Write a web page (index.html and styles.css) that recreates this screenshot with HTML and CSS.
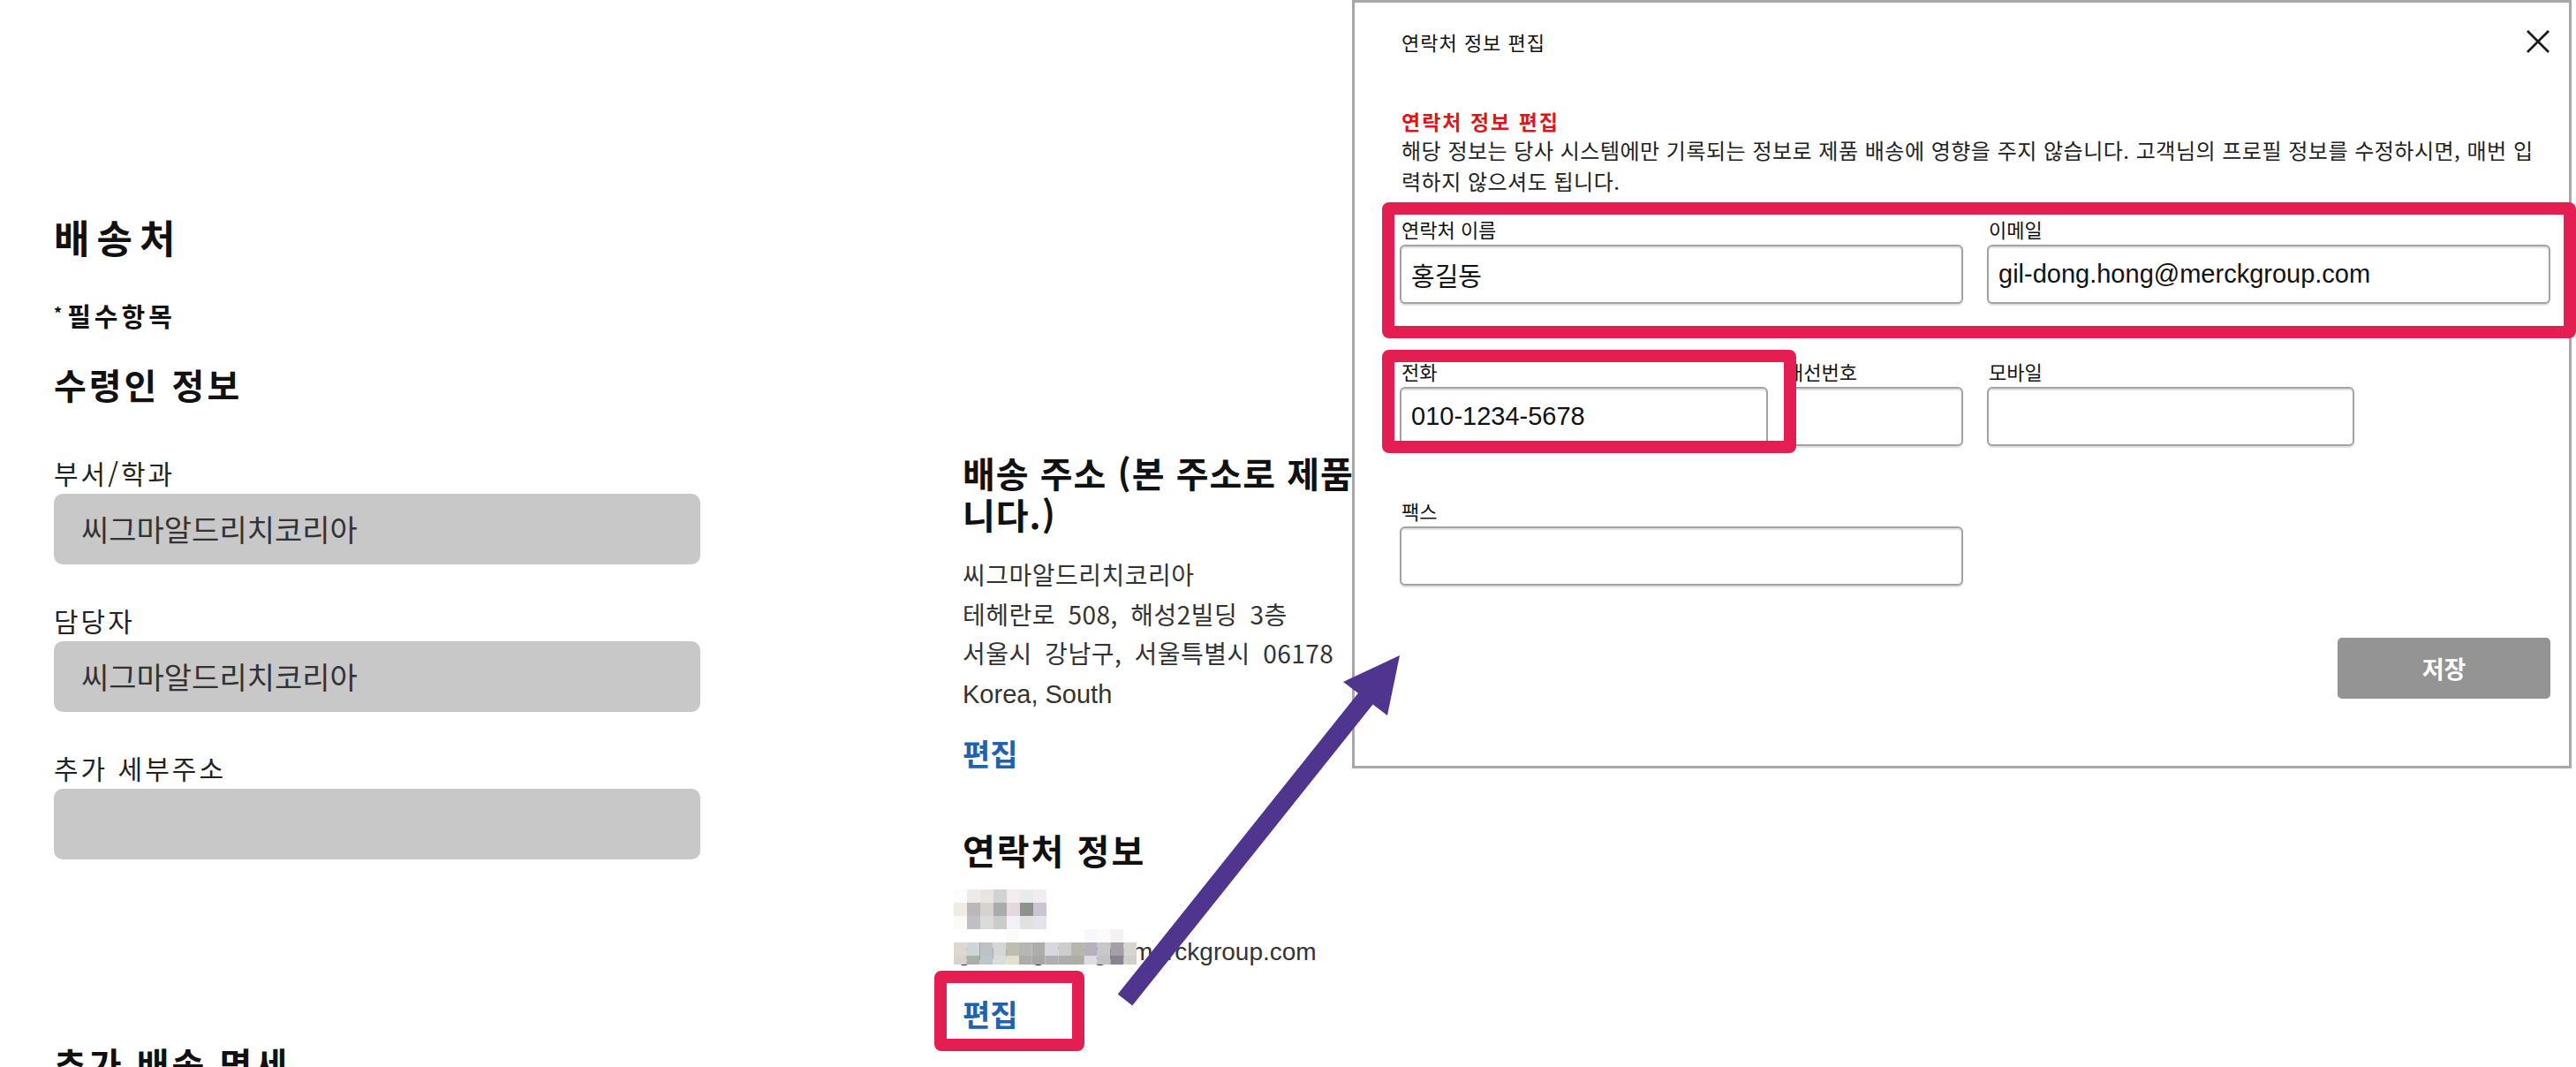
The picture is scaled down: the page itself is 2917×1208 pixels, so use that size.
FILE: index.html
```html
<!DOCTYPE html>
<html lang="ko">
<head>
    <meta charset="UTF-8">
    <meta name="viewport" content="width=device-width, initial-scale=1.0">
    <title>배송처</title>
    <link rel="stylesheet" href="styles.css">
</head>
<body>
    <div class="page">
        <div class="shipping">
            <h2 class="title">배송처</h2>
            <p class="required"><span class="star">*</span>필수항목</p>
            <h3 class="section">수령인 정보</h3>
            <div class="field">
                <div class="field-label">부서/학과</div>
                <div class="box">씨그마알드리치코리아</div>
            </div>
            <div class="field">
                <div class="field-label">담당자</div>
                <div class="box">씨그마알드리치코리아</div>
            </div>
            <div class="field">
                <div class="field-label">추가 세부주소</div>
                <div class="box"></div>
            </div>
            <h3 class="section more">추가 배송 명세</h3>
        </div>

        <div class="summary">
            <h3 class="section">배송 주소 (본 주소로 제품이 배송됩<br>니다.)</h3>
            <p class="address">씨그마알드리치코리아<br>테헤란로 508, 해성2빌딩 3층<br>서울시 강남구, 서울특별시 06178<br><span class="latin">Korea, South</span></p>
            <a class="edit">편집</a>

            <h3 class="section contact">연락처 정보</h3>
            <svg class="blur-name" width="105" height="45" viewBox="0 0 105 45">
                <rect x="0" y="0" width="15" height="15" fill="#fdfcfc"/><rect x="15" y="0" width="15" height="15" fill="#efe9ec"/><rect x="30" y="0" width="15" height="15" fill="#e7e5e2"/><rect x="45" y="0" width="15" height="15" fill="#d3d2d3"/><rect x="60" y="0" width="15" height="15" fill="#f3ecee"/><rect x="75" y="0" width="15" height="15" fill="#e6ecea"/><rect x="90" y="0" width="15" height="15" fill="#f0ecf1"/>
                <rect x="0" y="15" width="15" height="15" fill="#f2ebe3"/><rect x="15" y="15" width="15" height="15" fill="#bcb7bb"/><rect x="30" y="15" width="15" height="15" fill="#d6d2cf"/><rect x="45" y="15" width="15" height="15" fill="#a9acad"/><rect x="60" y="15" width="15" height="15" fill="#e3d8dc"/><rect x="75" y="15" width="15" height="15" fill="#8c9290"/><rect x="90" y="15" width="15" height="15" fill="#cac5d3"/>
                <rect x="0" y="30" width="15" height="15" fill="#fdfaf5"/><rect x="15" y="30" width="15" height="15" fill="#c2bfc4"/><rect x="30" y="30" width="15" height="15" fill="#dcdadb"/><rect x="45" y="30" width="15" height="15" fill="#cbcbc8"/><rect x="60" y="30" width="15" height="15" fill="#f1f1f7"/><rect x="75" y="30" width="15" height="15" fill="#e3e1dd"/><rect x="90" y="30" width="15" height="15" fill="#e3e3ec"/>
            </svg>
            <div class="email">gil-dong.hong@merckgroup.com
                <svg class="blur-mail" width="207" height="40" viewBox="0 0 210 40" preserveAspectRatio="none">
                    <rect x="0" y="0" width="210" height="15" fill="#ffffff"/><rect x="60" y="0" width="15" height="15" fill="#fbfbf8"/><rect x="150" y="0" width="15" height="15" fill="#f8f8fa"/><rect x="165" y="0" width="15" height="15" fill="#fbfbfb"/><rect x="180" y="0" width="15" height="15" fill="#f2f2f2"/>
                    <rect x="0" y="15" width="15" height="15" fill="#ddd8d2"/><rect x="15" y="15" width="15" height="15" fill="#ccd5d8"/><rect x="30" y="15" width="15" height="15" fill="#bfc2c4"/><rect x="45" y="15" width="15" height="15" fill="#d3d7d8"/><rect x="60" y="15" width="15" height="15" fill="#bdbdb1"/><rect x="75" y="15" width="15" height="15" fill="#b9b5b3"/><rect x="90" y="15" width="15" height="15" fill="#aeadad"/><rect x="105" y="15" width="15" height="15" fill="#d7d8df"/><rect x="120" y="15" width="15" height="15" fill="#cacfc9"/><rect x="135" y="15" width="15" height="15" fill="#b8b5ae"/><rect x="150" y="15" width="15" height="15" fill="#b7b1bf"/><rect x="165" y="15" width="15" height="15" fill="#c8c8cc"/><rect x="180" y="15" width="15" height="15" fill="#a69fa5"/><rect x="195" y="15" width="15" height="15" fill="#d6d6d0"/>
                    <rect x="0" y="30" width="15" height="10" fill="#d8d3cf"/><rect x="15" y="30" width="15" height="10" fill="#a9afa9"/><rect x="30" y="30" width="15" height="10" fill="#b9c6cb"/><rect x="45" y="30" width="15" height="10" fill="#d9dcd9"/><rect x="60" y="30" width="15" height="10" fill="#e5e0cd"/><rect x="75" y="30" width="15" height="10" fill="#aeabab"/><rect x="90" y="30" width="15" height="10" fill="#a7a7a5"/><rect x="105" y="30" width="15" height="10" fill="#b2adae"/><rect x="120" y="30" width="15" height="10" fill="#adaeab"/><rect x="135" y="30" width="15" height="10" fill="#adada5"/><rect x="150" y="30" width="15" height="10" fill="#dcdde2"/><rect x="165" y="30" width="15" height="10" fill="#c5c2c3"/><rect x="180" y="30" width="15" height="10" fill="#85858f"/><rect x="195" y="30" width="15" height="10" fill="#cfcfcc"/>
                </svg>
            </div>
            <a class="edit contact-edit">편집<span class="mark"></span></a>
        </div>
    </div>

    <div class="modal">
        <div class="modal-head">
            <span class="modal-title">연락처 정보 편집</span>
            <svg class="close" width="28" height="28" viewBox="0 0 28 28">
                <line x1="2" y1="2" x2="26" y2="26" stroke="#1a1a1a" stroke-width="2.6"/>
                <line x1="26" y1="2" x2="2" y2="26" stroke="#1a1a1a" stroke-width="2.6"/>
            </svg>
        </div>
        <p class="notice-title">연락처 정보 편집</p>
        <p class="notice">해당 정보는 당사 시스템에만 기록되는 정보로 제품 배송에 영향을 주지 않습니다. 고객님의 프로필 정보를 수정하시면, 매번 입<br>력하지 않으셔도 됩니다.</p>

        <div class="row first">
            <div class="input-group">
                <label>연락처 이름</label>
                <input type="text" value="홍길동">
            </div>
            <div class="input-group">
                <label>이메일</label>
                <input type="text" value="gil-dong.hong@merckgroup.com">
            </div>
            <span class="mark"></span>
        </div>

        <div class="row second">
            <div class="phone-pair">
                <div class="input-group phone">
                    <label>전화</label>
                    <input type="text" value="010-1234-5678">
                    <span class="mark"></span>
                </div>
                <div class="input-group">
                    <label>내선번호</label>
                    <input type="text">
                </div>
            </div>
            <div class="input-group mobile">
                <label>모바일</label>
                <input type="text">
            </div>
        </div>

        <div class="row third">
            <div class="input-group">
                <label>팩스</label>
                <input type="text">
            </div>
        </div>

        <div class="actions">
            <button class="save">저장</button>
        </div>
    </div>

    <svg class="arrow" width="2917" height="1208" viewBox="0 0 2917 1208">
        <line x1="1274" y1="1132" x2="1552" y2="784" stroke="#50358f" stroke-width="21"/>
        <polygon points="1585,742 1521,772 1571,810" fill="#50358f"/>
    </svg>
</body>
</html>
```

FILE: styles.css
```css
html, body {
    margin: 0;
    padding: 0;
}
body {
    font-family: "Noto Sans CJK KR", "Liberation Sans", sans-serif;
    color: #111;
    background: #fff;
    width: 2917px;
    height: 1208px;
    overflow: hidden;
    position: relative;
}
.page {
    display: flex;
    padding-left: 61px;
}

/* left column */
.shipping {
    width: 732px;
    flex-shrink: 0;
    padding-top: 243px;
}
.title {
    font-size: 44px;
    line-height: 50px;
    font-weight: 700;
    letter-spacing: 8px;
    margin: 0;
}
.required {
    font-size: 29px;
    line-height: 32px;
    font-weight: 700;
    letter-spacing: 4px;
    margin: 45px 0 0;
}
.star {
    font-size: 18px;
    vertical-align: 8px;
    margin-right: 2px;
}
.section {
    font-size: 40px;
    line-height: 48px;
    font-weight: 700;
    letter-spacing: 3px;
    margin: 38px 0 0;
}
.field {
    margin-top: 47px;
}
.shipping .section + .field {
    margin-top: 60px;
}
.field-label {
    font-size: 30px;
    line-height: 32px;
    letter-spacing: 3px;
    color: #222;
}
.box {
    margin-top: 8px;
    height: 80px;
    line-height: 80px;
    background-color: #c8c8c8;
    border-radius: 10px;
    padding-left: 31px;
    font-size: 34px;
    color: #333;
}
.section.more {
    margin-top: 207px;
}

/* middle column */
.summary {
    margin-left: 297px;
    width: 760px;
    flex-shrink: 0;
    padding-top: 512px;
}
.summary .section {
    margin: 0;
    line-height: 47px;
    letter-spacing: 1px;
    white-space: nowrap;
}
.address {
    margin: 22px 0 0;
    font-size: 28px;
    line-height: 44.5px;
    letter-spacing: 0.5px;
    word-spacing: 6px;
    color: #333;
}
.latin {
    font-family: "Liberation Sans", sans-serif;
    font-size: 29px;
    word-spacing: 0;
    letter-spacing: 0;
}
.edit {
    display: block;
    width: max-content;
    margin-top: 25px;
    font-size: 34px;
    line-height: 40px;
    font-weight: 700;
    color: #1f62ae;
    cursor: pointer;
}
.summary .section.contact {
    margin-top: 65px;
    line-height: 48px;
    letter-spacing: 2px;
}
.blur-name {
    display: block;
    margin-top: 21px;
    margin-left: -10px;
}
.email {
    position: relative;
    margin-top: 6px;
    margin-left: -6px;
    font-family: "Liberation Sans", sans-serif;
    font-size: 28px;
    line-height: 40px;
    color: #333;
    white-space: nowrap;
}
.blur-mail {
    position: absolute;
    left: -4px;
    top: -6px;
}
.contact-edit {
    position: relative;
    margin-top: 30px;
}
.mark {
    position: absolute;
    border: 14px solid #e41e50;
    border-radius: 8px;
    pointer-events: none;
    z-index: 3;
}
.contact-edit .mark {
    left: -32px;
    top: -29px;
    width: 170px;
    height: 91px;
    box-sizing: border-box;
}

/* modal */
.modal {
    position: absolute;
    left: 1531px;
    top: 0;
    width: 1381px;
    height: 870px;
    box-sizing: border-box;
    border: 3px solid #a8a8a8;
    background: #fff;
    padding: 0 21px 0 51px;
    z-index: 2;
}
.modal-head {
    display: flex;
    justify-content: space-between;
    align-items: center;
    margin-top: 29px;
    height: 30px;
}
.modal-title {
    font-size: 22px;
    line-height: 30px;
    letter-spacing: 1px;
    margin-left: 2px;
}
.close {
    display: block;
}
.notice-title {
    margin: 60px 0 0 2px;
    font-size: 23px;
    line-height: 31px;
    font-weight: 700;
    letter-spacing: 2px;
    color: #e3131b;
}
.notice {
    margin: 0 0 0 2px;
    font-size: 24px;
    line-height: 34.5px;
    letter-spacing: 0.5px;
    white-space: nowrap;
    color: #222;
}
.row {
    position: relative;
    display: grid;
    grid-template-columns: 1fr 1fr;
    column-gap: 27px;
}
.row.first {
    margin-top: 23px;
}
.row.second {
    margin-top: 62px;
}
.row.third {
    margin-top: 59px;
}
.row.first .mark {
    top: -16px;
    left: -20px;
    right: -29px;
    bottom: -39px;
}
.phone-pair {
    display: grid;
    grid-template-columns: 417px 1fr;
    column-gap: 18px;
}
.input-group {
    position: relative;
}
.input-group label {
    display: block;
    font-size: 22px;
    line-height: 28px;
    margin: 0 0 4px 2px;
    color: #111;
}
.input-group input {
    display: block;
    width: 100%;
    height: 67px;
    box-sizing: border-box;
    border: 2px solid #a3a3a3;
    border-radius: 6px;
    box-shadow: inset 0 2px 1px rgba(0, 0, 0, 0.12), 0 2px 1px rgba(0, 0, 0, 0.12);
    padding: 0 11px;
    font-family: "Liberation Sans", "Noto Sans CJK KR", sans-serif;
    font-size: 29px;
    color: #111;
    background: #fff;
}
.input-group.mobile {
    width: 416px;
}
.input-group.phone .mark {
    top: -10px;
    left: -20px;
    right: -32px;
    bottom: -8px;
}
.actions {
    display: flex;
    justify-content: flex-end;
    margin-top: 59px;
}
.save {
    width: 241px;
    height: 69px;
    border: none;
    border-radius: 5px;
    background-color: #949494;
    color: #fff;
    font-family: "Noto Sans CJK KR", sans-serif;
    font-size: 27px;
    font-weight: 700;
    cursor: pointer;
}

/* annotation arrow */
.arrow {
    position: absolute;
    left: 0;
    top: 0;
    pointer-events: none;
    z-index: 5;
}
```
